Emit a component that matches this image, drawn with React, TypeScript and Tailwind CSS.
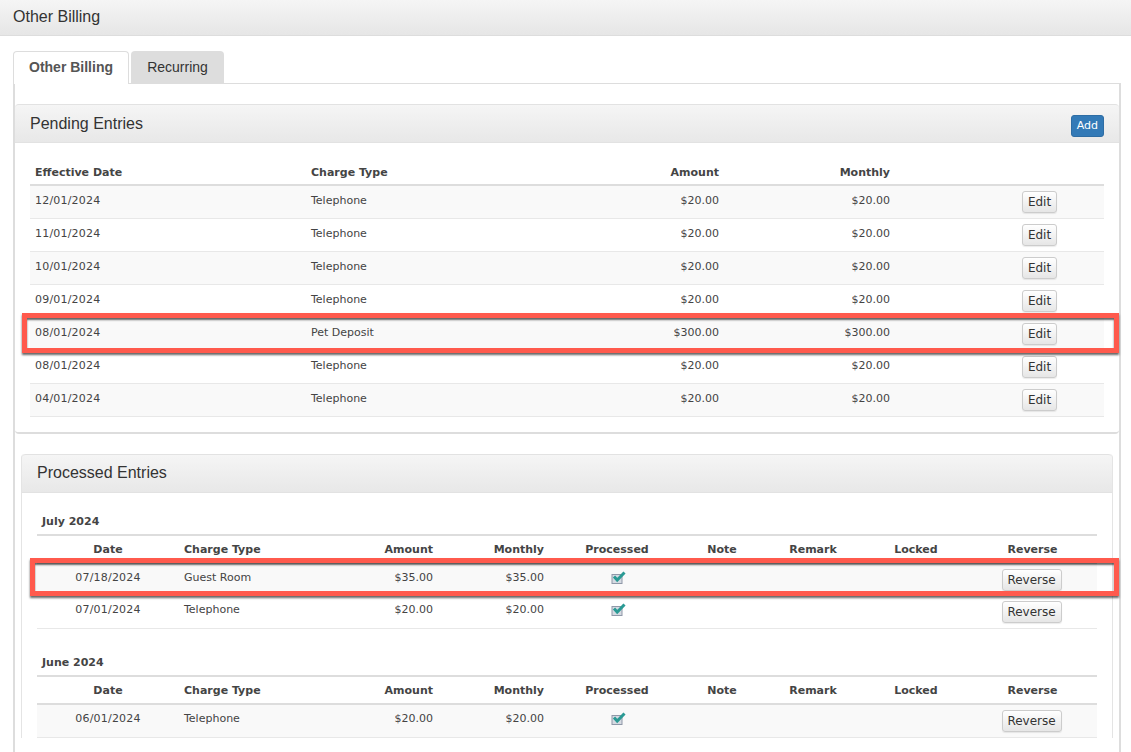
const sans = "font-['Liberation_Sans',Arial,sans-serif]";
const verdana = "font-['DejaVu_Sans',Verdana,sans-serif]";

const pending = [
  ["12/01/2024", "Telephone", "$20.00"],
  ["11/01/2024", "Telephone", "$20.00"],
  ["10/01/2024", "Telephone", "$20.00"],
  ["09/01/2024", "Telephone", "$20.00"],
  ["08/01/2024", "Pet Deposit", "$300.00"],
  ["08/01/2024", "Telephone", "$20.00"],
  ["04/01/2024", "Telephone", "$20.00"],
];

const btn =
  "inline-block h-[22px] rounded-[3px] border border-[#cccccc] bg-gradient-to-b from-white to-[#e6e6e6] text-[12px] leading-[20px] text-[#333333] shadow-[0_1px_1px_rgba(0,0,0,0.08)]";
const cell = "px-[5px] pt-[7px] align-top leading-[16px]";
const cellP = "px-[5px] pt-[6px] align-top leading-[16px]";

function Check() {
  return (
    <svg width="15" height="13" viewBox="0 0 15 13" className="inline-block align-top">
      <rect x="1" y="3.5" width="10" height="9" fill="#d5dae2" stroke="#8f98a8" />
      <path d="M3 5.5 L6.2 9 L13.5 1.5" fill="none" stroke="#2a9a94" strokeWidth="3" />
    </svg>
  );
}

function Heading({ children, right }: { children: string; right?: React.ReactNode }) {
  return (
    <div className="flex h-[39px] items-center justify-between rounded-t-[4px] border-b border-t border-[#e2e2e2] bg-gradient-to-b from-[#f5f5f5] to-[#e8e8e8] px-[15px]">
      <span className={`${sans} text-[16px] text-[#333333]`}>{children}</span>
      {right}
    </div>
  );
}

function Month({ label, rows, mt }: { label: string; rows: string[][]; mt: string }) {
  const heads: [string, string][] = [
    ["Date", "text-center"],
    ["Charge Type", "text-left"],
    ["Amount", "text-right"],
    ["Monthly", "text-right"],
    ["Processed", "text-center pl-[8px]"],
    ["Note", "text-center"],
    ["Remark", "text-center"],
    ["Locked", "text-center"],
    ["Reverse", "text-center"],
  ];
  return (
    <div className={mt}>
      <div className="h-[28px] border-b-2 border-[#dddddd] pl-[5px] pt-[6px] text-[11px] font-bold leading-[16px] text-[#444444]">
        {label}
      </div>
      <table className="w-full table-fixed border-collapse text-[11px] text-[#444444]">
        <colgroup>
          <col className="w-[142px]" />
          <col className="w-[148px]" />
          <col className="w-[111px]" />
          <col className="w-[111px]" />
          <col className="w-[133px]" />
          <col className="w-[80px]" />
          <col className="w-[102px]" />
          <col className="w-[104px]" />
          <col className="w-[129px]" />
        </colgroup>
        <thead>
          <tr className="h-[27px] border-b-2 border-[#dddddd]">
            {heads.map(([t, c]) => (
              <th key={t} className={`${c} px-[5px] pt-[3px] font-bold`}>
                {t}
              </th>
            ))}
          </tr>
        </thead>
        <tbody>
          {rows.map((r, i) => (
            <tr key={i} className={`h-[33px] border-b border-[#e8e8e8] ${i % 2 === 0 ? "bg-[#f9f9f9]" : "bg-white"}`}>
              <td className={`${cellP} text-center tracking-[0.2px]`}>{r[0]}</td>
              <td className={cellP}>{r[1]}</td>
              <td className={`${cellP} text-right`}>{r[2]}</td>
              <td className={`${cellP} text-right`}>{r[2]}</td>
              <td className="pl-[10px] pr-[5px] pt-[7px] align-top text-center">
                <Check />
              </td>
              <td />
              <td />
              <td />
              <td className="pl-[5px] pr-[7px] pt-[5px] align-top text-center">
                <button className={`${btn} w-[60px]`}>Reverse</button>
              </td>
            </tr>
          ))}
        </tbody>
      </table>
    </div>
  );
}

export default function App() {
  return (
    <div className={`${verdana} relative h-[752px] w-[1131px] overflow-hidden bg-white`}>
      <div className={`${sans} h-[36px] border-b border-[#dddddd] bg-gradient-to-b from-[#f5f5f5] to-[#e6e6e6] pl-[13px] text-[16px] leading-[33px] text-[#333333]`}>
        Other Billing
      </div>

      <div className="ml-[13px] mr-[10px] mt-[15px]">
        <div className={`${sans} flex h-[32px] items-start gap-[2px] text-[14px]`}>
          <div className="relative z-10 h-[33px] w-[116px] rounded-t-[4px] border border-b-0 border-[#dddddd] bg-white text-center font-bold leading-[31px] text-[#555555]">
            Other Billing
          </div>
          <div className="h-[32px] w-[93px] rounded-t-[4px] bg-[#dddddd] text-center leading-[32px] text-[#333333]">
            Recurring
          </div>
        </div>

        <div className="h-[700px] border-l-2 border-r-2 border-t border-[#dddddd] pt-[20px]">
          <div className="rounded-[4px] border-b-2 border-[#dddddd] bg-white">
            <Heading
              right={
                <button className="mt-[5px] h-[22px] rounded-[3px] border border-[#2e6da4] bg-[#337ab7] px-[5px] text-[11px] font-normal leading-[20px] text-white">
                  Add
                </button>
              }
            >
              Pending Entries
            </Heading>
            <div className="px-[15px] pb-[15px] pt-[17px]">
              <table className="w-full table-fixed border-collapse text-[11px] text-[#444444]">
                <colgroup>
                  <col className="w-[276px]" />
                  <col className="w-[248px]" />
                  <col className="w-[170px]" />
                  <col className="w-[171px]" />
                  <col className="w-[80px]" />
                  <col className="w-[129px]" />
                </colgroup>
                <thead>
                  <tr className="h-[25px] border-b-2 border-[#dddddd]">
                    <th className="px-[5px] pt-[2px] text-left font-bold">Effective Date</th>
                    <th className="px-[5px] pt-[2px] text-left font-bold">Charge Type</th>
                    <th className="px-[5px] pt-[2px] text-right font-bold">Amount</th>
                    <th className="px-[5px] pt-[2px] text-right font-bold">Monthly</th>
                    <th />
                    <th />
                  </tr>
                </thead>
                <tbody>
                  {pending.map((r, i) => (
                    <tr key={i} className={`h-[33px] border-b border-[#e8e8e8] ${i % 2 === 0 ? "bg-[#f9f9f9]" : "bg-white"}`}>
                      <td className={`${cell} tracking-[0.2px]`}>{r[0]}</td>
                      <td className={cell}>{r[1]}</td>
                      <td className={`${cell} text-right`}>{r[2]}</td>
                      <td className={`${cell} text-right`}>{r[2]}</td>
                      <td />
                      <td className="pt-[5px] align-top text-center">
                        <button className={`${btn} px-[5px]`}>Edit</button>
                      </td>
                    </tr>
                  ))}
                </tbody>
              </table>
            </div>
          </div>

          <div className="mx-[6px] mt-[20px] rounded-t-[4px] border-l border-r border-[#e4e4e4]">
            <Heading>Processed Entries</Heading>
            <div className="px-[15px] pt-[15px]">
              <Month
                label="July 2024"
                mt=""
                rows={[
                  ["07/18/2024", "Guest Room", "$35.00"],
                  ["07/01/2024", "Telephone", "$20.00"],
                ]}
              />
              <Month label="June 2024" mt="mt-[20px]" rows={[["06/01/2024", "Telephone", "$20.00"]]} />
            </div>
          </div>
        </div>
      </div>

      <div className="absolute left-[22px] top-[313px] h-[40px] w-[1097px] border-[5px] border-[#ff5a4d] shadow-[0_2px_2px_rgba(0,0,0,0.6),inset_0_2px_2px_rgba(0,0,0,0.6)]" />
      <div className="absolute left-[30px] top-[558px] h-[38px] w-[1089px] border-[5px] border-[#ff5a4d] shadow-[0_2px_2px_rgba(0,0,0,0.6),inset_0_2px_2px_rgba(0,0,0,0.6)]" />
    </div>
  );
}
